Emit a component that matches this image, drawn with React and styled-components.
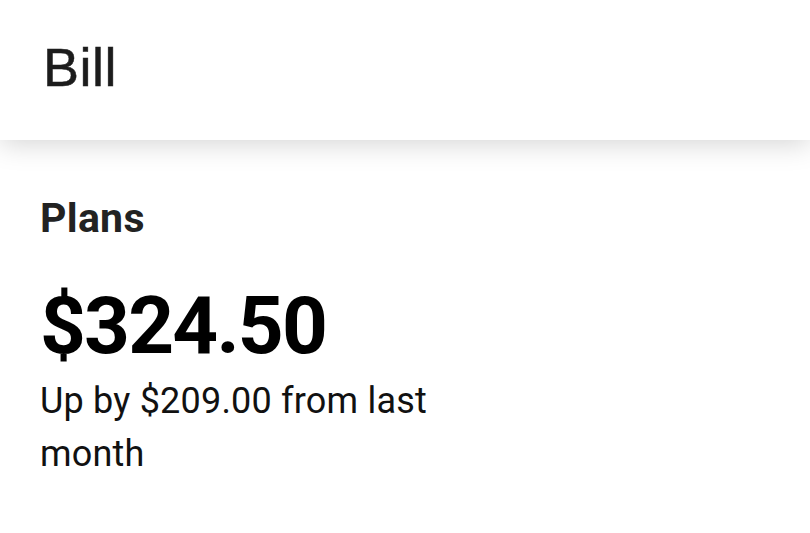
import React from "react";
import styled, { createGlobalStyle } from "styled-components";

const Global = createGlobalStyle`
  html, body { margin: 0; padding: 0; background: #ffffff; }
  body { font-family: Roboto, "Liberation Sans", sans-serif; }
`;

const Page = styled.div`
  display: flex;
  flex-direction: column;
  min-height: 533px;
  background: #fff;
`;

const Header = styled.header`
  position: relative;
  z-index: 1;
  height: 140px;
  box-sizing: border-box;
  display: flex;
  align-items: center;
  padding: 0 0 6px 43px;
  background: #fff;
  box-shadow: 0 4px 26px rgba(0, 0, 0, 0.17);
`;

const Title = styled.h1`
  margin: 0;
  font-family: "Liberation Sans", Arial, sans-serif;
  font-weight: 400;
  font-size: 54px;
  color: #1c1c1c;
  letter-spacing: 0.5px;
  -webkit-text-stroke: 0.5px #1c1c1c;
`;

const Content = styled.main`
  display: flex;
  flex-direction: column;
  padding: 54px 40px 0;
  max-width: 440px;
`;

const SectionTitle = styled.h2`
  margin: 0;
  font-family: Roboto, sans-serif;
  font-weight: 700;
  font-size: 41px;
  line-height: 48px;
  color: #222;
  letter-spacing: 0.3px;
`;

const Amount = styled.div`
  margin-top: 39px;
  font-family: Roboto, sans-serif;
  font-weight: 700;
  font-size: 80px;
  line-height: 90px;
  color: #000;
  letter-spacing: -1.8px;
`;

const Note = styled.p`
  margin: 4px 0 0;
  font-family: Roboto, sans-serif;
  font-weight: 400;
  font-size: 36px;
  line-height: 53px;
  color: #111;
  letter-spacing: 0.2px;
`;

export default function App() {
  return (
    <Page>
      <Global />
      <Header>
        <Title>Bill</Title>
      </Header>
      <Content>
        <SectionTitle>Plans</SectionTitle>
        <Amount>$324.50</Amount>
        <Note>Up by $209.00 from last month</Note>
      </Content>
    </Page>
  );
}
